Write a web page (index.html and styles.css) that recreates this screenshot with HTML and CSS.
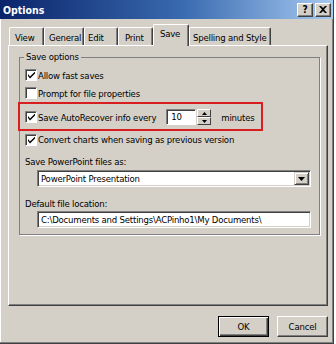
FILE: index.html
```html
<!DOCTYPE html>
<html>
<head>
<meta charset="utf-8">
<title>Options</title>
<link rel="stylesheet" href="styles.css">
</head>
<body>
<div class="window">
  <div class="titlebar">
    <span class="title">Options</span>
    <div class="tbtns">
      <span class="tbtn help">?</span>
      <span class="tbtn close"><svg width="8" height="7" viewBox="0 0 8 7"><path d="M0 0h2l2 2 2-2h2L5 3.5 8 7H6L4 5 2 7H0l3-3.5z" fill="#000"/></svg></span>
    </div>
  </div>
  <div class="client">
    <div class="tabs">
      <div class="tab t-view">View</div>
      <div class="tab t-general">General</div>
      <div class="tab t-edit">Edit</div>
      <div class="tab t-print">Print</div>
      <div class="tab t-save sel">Save</div>
      <div class="tab t-spell">Spelling and Style</div>
    </div>
    <div class="panel">
      <fieldset class="group">
        <legend class="legend">Save options</legend>
        <div class="row"><span class="box"><svg width="7" height="7" viewBox="0 0 7 7"><path d="M0 2v2l2 2.5L7 1.5v-2L2 4.5z" fill="#000"/></svg></span><span class="lbl">Allow fast saves</span></div>
        <div class="row"><span class="box"></span><span class="lbl">Prompt for file properties</span></div>
        <div class="highlight">
          <div class="row auto"><span class="box"><svg width="7" height="7" viewBox="0 0 7 7"><path d="M0 2v2l2 2.5L7 1.5v-2L2 4.5z" fill="#000"/></svg></span><span class="lbl">Save AutoRecover info every</span>
            <span class="num">10</span>
            <span class="spin"><span class="sp up"><svg width="5" height="3" viewBox="0 0 5 3"><path d="M0 3h5L2.5 0z" fill="#000"/></svg></span><span class="sp down"><svg width="5" height="3" viewBox="0 0 5 3"><path d="M0 0h5L2.5 3z" fill="#000"/></svg></span></span>
            <span class="unit">minutes</span>
          </div>
        </div>
        <div class="row conv"><span class="box"><svg width="7" height="7" viewBox="0 0 7 7"><path d="M0 2v2l2 2.5L7 1.5v-2L2 4.5z" fill="#000"/></svg></span><span class="lbl">Convert charts when saving as previous version</span></div>
        <div class="flabel l1">Save PowerPoint files as:</div>
        <div class="field select"><span class="val">PowerPoint Presentation</span><span class="drop"><svg width="7" height="4" viewBox="0 0 7 4"><path d="M0 0h7L3.5 4z" fill="#000"/></svg></span></div>
        <div class="flabel l2">Default file location:</div>
        <div class="field text"><span class="val">C:\Documents and Settings\ACPinho1\My Documents\</span></div>
      </fieldset>
    </div>
    <div class="buttons">
      <div class="btn default"><span>OK</span></div>
      <div class="btn"><span>Cancel</span></div>
    </div>
  </div>
</div>
</body>
</html>
```

FILE: styles.css
```css
* { box-sizing: border-box; }
html, body { margin: 0; padding: 0; }
body {
  width: 336px;
  height: 344px;
  background: #ffffff;
  font-family: "DejaVu Sans Condensed", "DejaVu Sans", sans-serif;
  font-stretch: condensed;
  font-size: 9.5px;
  letter-spacing: -0.2px;
  color: #000;
  overflow: hidden;
}
.window {
  width: 334px;
  height: 344px;
  background: #d4d0c8;
  border-right: 1px solid #404040;
  border-bottom: 1px solid #404040;
  box-shadow: inset -1px -1px 0 #808080, inset 1px 0 0 #ffffff;
  display: flex;
  flex-direction: column;
}
.titlebar {
  height: 19px;
  background: linear-gradient(to right, #0a246a 0%, #3a6ab0 55%, #a6caf0 100%);
  display: flex;
  align-items: center;
  justify-content: space-between;
  padding: 0 2px 0 3px;
}
.title {
  color: #fff;
  font-weight: bold;
  font-size: 10.5px;
  letter-spacing: 0;
}
.tbtns { display: flex; gap: 2px; }
.tbtn {
  width: 16px;
  height: 14px;
  background: #d4d0c8;
  border-top: 1px solid #fff;
  border-left: 1px solid #fff;
  border-right: 1px solid #404040;
  border-bottom: 1px solid #404040;
  box-shadow: inset -1px -1px 0 #808080;
  display: flex;
  align-items: center;
  justify-content: center;
  font-weight: bold;
  font-size: 10px;
  line-height: 1;
}
.client {
  flex: 1;
  display: flex;
  flex-direction: column;
  padding: 5px 6px 0 8px;
}
.tabs {
  display: flex;
  align-items: flex-end;
  height: 21px;
  padding-left: 1px;
  position: relative;
  z-index: 2;
}
.tab {
  height: 18px;
  border-top: 1px solid #fff;
  border-left: 1px solid #fff;
  border-right: 1px solid #404040;
  box-shadow: inset -1px 0 0 #808080;
  border-radius: 2px 2px 0 0;
  display: flex;
  align-items: center;
  padding-left: 5px;
  padding-top: 2px;
  white-space: nowrap;
  overflow: hidden;
}
.t-view { width: 35px; }
.t-general { width: 40px; padding-left: 4px; }
.t-edit { width: 34px; padding-left: 3px; }
.t-print { width: 35px; padding-left: 6px; }
.t-save { width: 36px; }
.t-spell { width: 82px; padding-left: 3px; }
.tab.sel {
  height: 22px;
  margin-bottom: -1px;
  background: #d4d0c8;
  padding-bottom: 4px;
  padding-left: 6px;
  padding-top: 0;
}
.panel {
  width: 320px;
  height: 261px;
  border-top: 1px solid #fff;
  border-left: 1px solid #fff;
  border-right: 1px solid #404040;
  border-bottom: 1px solid #404040;
  box-shadow: inset -1px -1px 0 #808080;
  padding: 5px 7px 0 10px;
}
.group {
  margin: 0;
  height: 184px;
  border: 1px solid #808080;
  box-shadow: 1px 1px 0 #fff;
  padding: 3px 7px 0 5px;
  display: flex;
  flex-direction: column;
}
.legend {
  padding: 0 2px;
  margin-left: -1px;
  line-height: 12px;
}
.row {
  height: 18px;
  display: flex;
  align-items: center;
}
.box {
  width: 12px;
  height: 12px;
  flex: none;
  background: #fff;
  border-top: 1px solid #808080;
  border-left: 1px solid #808080;
  border-right: 1px solid #fff;
  border-bottom: 1px solid #fff;
  box-shadow: inset 1px 1px 0 #404040;
  display: flex;
  align-items: center;
  justify-content: center;
  margin-right: 1px;
  padding: 1px 0 0 1px;
}
.lbl { white-space: nowrap; }
.highlight {
  margin-left: -7px;
  width: 245px;
  height: 29px;
  border: 2px solid #d81e1e;
  padding: 3px 0 0 5px;
}
.auto { height: 20px; }
.num {
  width: 30px;
  height: 16px;
  margin-left: 10px;
  background: #fff;
  border-top: 1px solid #808080;
  border-left: 1px solid #808080;
  border-right: 1px solid #fff;
  border-bottom: 1px solid #fff;
  box-shadow: inset 1px 1px 0 #404040;
  padding: 1px 0 0 4px;
  line-height: 12px;
}
.spin {
  width: 14px;
  height: 16px;
  margin-left: 1px;
  display: flex;
  flex-direction: column;
}
.sp {
  flex: 1;
  background: #d4d0c8;
  border-top: 1px solid #fff;
  border-left: 1px solid #fff;
  border-right: 1px solid #404040;
  border-bottom: 1px solid #404040;
  display: flex;
  align-items: center;
  justify-content: center;
}
.sp svg { display: block; }
.unit { margin-left: 10px; }
.conv { height: 17px; }
.flabel {
  height: 14px;
  line-height: 14px;
  white-space: nowrap;
}
.l1 { margin-top: 7px; }
.l2 { margin-top: 10px; }
.field {
  margin-left: 12px;
  width: 274px;
  height: 17px;
  flex: none;
  background: #fff;
  border-top: 1px solid #808080;
  border-left: 1px solid #808080;
  border-right: 1px solid #fff;
  border-bottom: 1px solid #fff;
  box-shadow: inset 1px 1px 0 #404040, inset -1px -1px 0 #d4d0c8;
  display: flex;
  align-items: center;
  padding: 0 2px 0 3px;
  white-space: nowrap;
}
.select { margin-top: 1px; }
.text { margin-top: 0; }
.val { flex: 1; }
.drop {
  width: 15px;
  height: 13px;
  background: #d4d0c8;
  border-top: 1px solid #d4d0c8;
  border-left: 1px solid #d4d0c8;
  border-right: 1px solid #404040;
  border-bottom: 1px solid #404040;
  box-shadow: inset 1px 1px 0 #fff, inset -1px -1px 0 #808080;
  display: flex;
  align-items: center;
  justify-content: center;
  margin-right: -1px;
}
.drop svg { display: block; }
.buttons {
  display: flex;
  justify-content: flex-end;
  gap: 8px;
  margin-top: 10px;
  padding-right: 0;
  width: 320px;
}
.btn {
  width: 51px;
  height: 21px;
  background: #d4d0c8;
  border-top: 1px solid #fff;
  border-left: 1px solid #fff;
  border-right: 1px solid #404040;
  border-bottom: 1px solid #404040;
  box-shadow: inset -1px -1px 0 #808080;
  display: flex;
  align-items: center;
  justify-content: center;
}
.btn.default {
  border: 1px solid #000;
  box-shadow: inset 1px 1px 0 #fff, inset -1px -1px 0 #404040, inset -2px -2px 0 #808080;
}
```
